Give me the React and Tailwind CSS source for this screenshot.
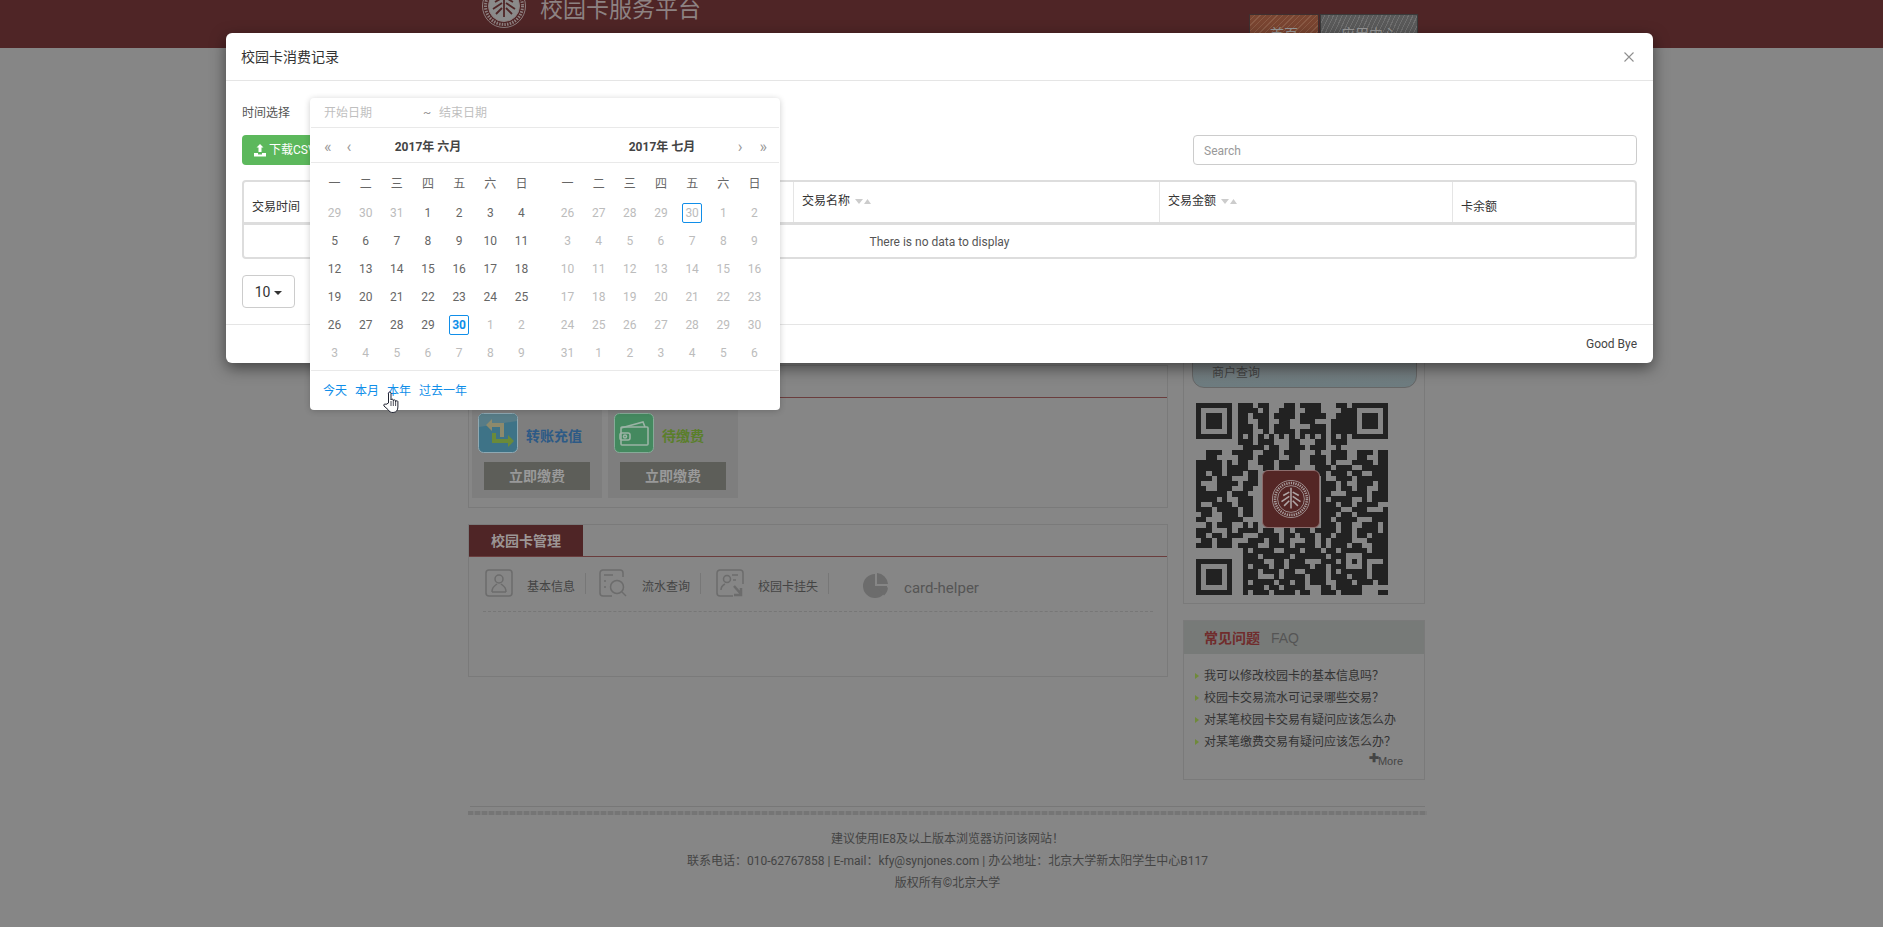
const june = [
  ...[29, 30, 31].map((d) => ({ d, off: true })),
  ...Array.from({ length: 30 }, (_, i) => ({ d: i + 1, off: false })),
  ...Array.from({ length: 9 }, (_, i) => ({ d: i + 1, off: true })),
];
const july = [
  ...[26, 27, 28, 29, 30].map((d) => ({ d, off: true })),
  ...Array.from({ length: 31 }, (_, i) => ({ d: i + 1, off: true })),
  ...Array.from({ length: 6 }, (_, i) => ({ d: i + 1, off: true })),
];
const weekdays = ['一', '二', '三', '四', '五', '六', '日'];

const qrRows = [
  '........###.##...##.####...##.#......',
  '........####.#..###..###....##.......',
  '........##.###.####.#####..###.......',
  '........##..##..##..###...####.......',
  '........###.##.###....###.####.......',
  '........###..#.####.#####.####.......',
  '........#.#.#.#.#.#.#.#.#.#.#........',
  '........###.###...##...##.###........',
  '.........####.##..###.###..#.........',
  '..###..####..###.###...#..###..###.##',
  '..##....###.####..##..###.###..##..##',
  '#####.#.##..###.####..###.#...####.##',
  '#####.####...##.###....###.###..#####',
  '##.##.###.##...........##.###.##..###',
  '###.###...##............#..###.######',
  '#...####.###............###.#..###.##',
  '##..###..##.............###.##.##..##',
  '######.###..............##...####.###',
  '####.#..###.............#.####..#.###',
  '#..####.###.............###.##.####..',
  '###.####.##.............####..###...#',
  '.##..###.##.............###.##.######',
  '##...####...............##.####...###',
  '..#.###..#.#............###.##..###.#',
  '###...#.####.##..#.###.####.##.####.#',
  '##.##.###...####.##.###.##.###.##.###',
  '.##.###...###.##.#...##.#.####...####',
  '###.###.####..####.####.#.###.##..###',
  '.........#.####..###.###.##.#####.###',
  '.........###.#####.######.###...#####',
  '.........####..##.###...###.#.#.#...#',
  '.........#.###.##.####.##.###...#.###',
  '.........###.###.##..####.#.#####.###',
  '.........###...#.####.###.###.###.###',
  '.........#.####.##.##.###..###.###.##',
  '.........####.##.####...##.#####.....',
  '.........#.###.####.##..###.####...##',
];

function Seal({ size, ring, fill, mark }) {
  return (
    <svg width={size} height={size} viewBox="0 0 44 44" className="shrink-0">
      <circle cx="22" cy="22" r="21.500" fill="none" stroke={ring} strokeWidth="1" />
      <circle cx="22" cy="22" r="18.500" fill="none" stroke={ring} strokeWidth="3" strokeDasharray="1.5 1.2" />
      <circle cx="22" cy="22" r="15.500" fill={fill} stroke={ring} strokeWidth="1" />
      <g fill="none" stroke={mark} strokeWidth="1.800">
        <path d="M22 9v24" />
        <path d="M20 14l-7 4M24 14l7 4M20 19l-9 6M24 19l9 6M20 24l-6 6M24 24l6 6" />
      </g>
    </svg>
  );
}

function QrCode() {
  const cells = [];
  qrRows.forEach((row, y) => {
    row.split('').forEach((c, x) => {
      if (c === '#') cells.push(<rect key={`${x}-${y}`} x={x} y={y} width="1.02" height="1.02" />);
    });
  });
  const finder = (x, y) => (
    <g key={`f${x}${y}`}>
      <rect x={x} y={y} width="7" height="7" />
      <rect x={x + 1} y={y + 1} width="5" height="5" fill="#868686" />
      <rect x={x + 2} y={y + 2} width="3" height="3" />
    </g>
  );
  return (
    <div className="relative w-[192px] h-[192px]">
      <svg width="192" height="192" viewBox="0 0 37 37" fill="#222222" shapeRendering="crispEdges">
        {cells}
        {finder(0, 0)}
        {finder(30, 0)}
        {finder(0, 30)}
        <rect x="28" y="28" width="5" height="5" />
        <rect x="29" y="29" width="3" height="3" fill="#868686" />
        <rect x="30" y="30" width="1" height="1" />
      </svg>
      <div className="absolute left-[66px] top-[67px] w-[58px] h-[58px] rounded-md bg-[#542625] border border-[#8d6e6e] flex items-center justify-center">
        <Seal size={38} ring="#a69a9a" fill="#542625" mark="#b0a6a6" />
      </div>
    </div>
  );
}

function SortCaret() {
  return (
    <svg width="16" height="6" viewBox="0 0 16 6" className="ml-[5px] mt-[7px] shrink-0" fill="#cccccc">
      <path d="M0 0h8l-4 5zM9 5h7l-3.500-5z" />
    </svg>
  );
}

function Month({ title, days, marked, side }) {
  return (
    <div className={`w-[218px] ${side === 'left' ? 'ml-[9px]' : 'ml-[15px]'}`}>
      <div className="grid grid-cols-7 h-[30px] items-center text-center text-[#666]">
        {weekdays.map((w) => (
          <span key={w}>{w}</span>
        ))}
      </div>
      <div className="grid grid-cols-7 text-center" aria-label={title}>
        {days.map((c, i) => (
          <div key={i} className="h-[28px] flex items-center justify-center">
            <span
              className={`w-[20px] h-[20px] leading-[18px] rounded-[2px] border ${
                i === marked ? 'border-[#108ee9]' : 'border-transparent'
              } ${c.off ? 'text-[#bcbcbc]' : i === marked ? 'text-[#108ee9] font-bold' : 'text-[#666]'}`}
            >
              {c.d}
            </span>
          </div>
        ))}
      </div>
    </div>
  );
}

function DatePicker() {
  return (
    <div className="absolute left-[84px] top-[17px] w-[470px] h-[312px] bg-white rounded-[4px] shadow-[0_1px_6px_rgba(0,0,0,0.2)] text-xs">
      {/* input row */}
      <div className="h-[30px] mx-px flex items-center border-b border-[#e9e9e9] text-[#bfbfbf] pl-[13px]">
        <span className="w-[99px] pt-[1px]">开始日期</span>
        <span className="w-[16px] text-[#999]">~</span>
        <span className="pt-[1px]">结束日期</span>
      </div>

      {/* month titles */}
      <div className="h-[35px] mx-px flex border-b border-[#e9e9e9] text-[#444] pt-[3px]">
        <div className="w-[234px] grid grid-cols-[1fr_auto_1fr] items-center">
          <div className="flex items-center gap-[15px] pl-[13px] text-[16px] leading-none text-[#999]">
            <span>«</span>
            <span>‹</span>
          </div>
          <span className="font-bold">2017年 六月</span>
          <span />
        </div>
        <div className="w-[234px] grid grid-cols-[1fr_auto_1fr] items-center">
          <span />
          <span className="font-bold">2017年 七月</span>
          <div className="flex items-center justify-end gap-[17px] pr-[12px] text-[16px] leading-none text-[#999]">
            <span>›</span>
            <span>»</span>
          </div>
        </div>
      </div>

      <div className="flex pt-[6px] h-[207px]">
        <Month title="2017年 六月" days={june} marked={32} side="left" />
        <Month title="2017年 七月" days={july} marked={4} side="right" />
      </div>

      {/* quick ranges */}
      <div className="h-[40px] mx-px flex items-center gap-[8px] border-t border-[#e9e9e9] pl-[12px] text-[#108ee9]">
        <span>今天</span>
        <span>本月</span>
        <span>本年</span>
        <span>过去一年</span>
      </div>
    </div>
  );
}

function Modal() {
  return (
    <div className="absolute left-[226px] top-[33px] w-[1427px] h-[330px] bg-white rounded-[6px] shadow-[0_5px_15px_rgba(0,0,0,0.5)] flex flex-col text-xs text-[#333]">
      <div className="h-[48px] flex items-center justify-between border-b border-[#e5e5e5] pl-[15px] pr-[19px] shrink-0">
        <span className="text-sm text-[#333]">校园卡消费记录</span>
        <svg width="10" height="10" viewBox="0 0 10 10" stroke="#8f8f8f" strokeWidth="1.100">
          <path d="M0.500 0.500l9 9M9.500 0.500l-9 9" />
        </svg>
      </div>

      <div className="h-[243px] shrink-0 relative px-[16px]">
        <div className="h-[54px] pt-[23px] text-[#555] leading-[18px]">时间选择</div>

        <div className="flex justify-between h-[30px]">
          <div className="w-[76px] h-[30px] rounded-[4px] bg-[#5cb85c] text-white flex items-center pl-[11px] gap-[2px]">
            <svg width="14" height="14" viewBox="0 0 14 14" fill="#ffffff">
              <path d="M1 10h4v1.500h4V10h4v3.500H1zM7 1l3.500 3.500H8.500V9h-3V4.500H3.500z" />
            </svg>
            <span>下载CSV</span>
          </div>
          <div className="w-[444px] h-[30px] rounded-[4px] border border-[#cccccc] flex items-center pl-[10px] pt-[1px] text-[#999]">
            Search
          </div>
        </div>

        <div className="mt-[15px] w-[1395px] h-[79px] rounded-[4px] border-2 border-[#dddddd] flex flex-col text-[#333]">
          <div className="h-[40px] flex border-b-[3px] border-[#dddddd] box-content">
            <div className="w-[549px] px-[8px] pt-[16px] leading-[18px]">交易时间</div>
            <div className="w-[366px] border-l border-[#e5e5e5] px-[8px] pt-[10px] flex items-start leading-[18px]">
              交易名称
              <SortCaret />
            </div>
            <div className="w-[293px] border-l border-[#e5e5e5] px-[8px] pt-[10px] flex items-start leading-[18px]">
              交易金额
              <SortCaret />
            </div>
            <div className="flex-1 border-l border-[#e5e5e5] px-[8px] pt-[16px] leading-[18px]">卡余额</div>
          </div>
          <div className="flex-1 flex items-center justify-center text-[#555] pt-[1px]">There is no data to display</div>
        </div>

        <div className="mt-[16px] w-[53px] h-[33px] rounded-[4px] border border-[#cccccc] flex items-center justify-center gap-[4px] text-sm text-[#333]">
          10
          <span className="w-0 h-0 mt-[2px] border-x-4 border-t-4 border-x-transparent border-t-[#333]" />
        </div>

        <DatePicker />
      </div>

      <div className="flex-1 border-t border-[#e5e5e5] flex items-center justify-end pr-[16px] text-[#444]">Good Bye</div>
    </div>
  );
}

function PayCard({ name, color, icon }) {
  return (
    <div className="w-[130px] h-[96px] bg-[#7e7e7e] px-[6px] pt-[11px]">
      <div className="flex items-center gap-[8px]">
        {icon}
        <span className={`text-sm font-bold mt-[5px] ${color}`}>{name}</span>
      </div>
      <div className="mt-[9px] mx-[6px] h-[28px] bg-[#5d5e59] text-[#999] text-sm font-bold flex items-center justify-center">
        立即缴费
      </div>
    </div>
  );
}

function TransferIcon() {
  return (
    <svg width="40" height="40" viewBox="0 0 40 40" className="shrink-0">
      <rect x="0.500" y="0.500" width="39" height="39" rx="5" fill="#3e7387" stroke="#8fa9b3" />
      <path d="M1 14L39 8V5a4 4 0 0 0-4-4H5a4 4 0 0 0-4 4z" fill="#577c87" />
      <path d="M8 12l6-6v4h12v14h-4V14H14v4z" fill="#8d8a6c" />
      <path d="M14 20h4v6h12v-4l6 6-6 6v-4H14z" fill="#6a8a3a" />
    </svg>
  );
}

function WalletIcon() {
  return (
    <svg width="40" height="40" viewBox="0 0 40 40" className="shrink-0">
      <rect x="0.500" y="0.500" width="39" height="39" rx="5" fill="#44895f" stroke="#86ab98" />
      <g fill="none" stroke="#9bb3a5" strokeWidth="1.600">
        <path d="M7 15l22-6 2 5" />
        <rect x="7" y="14" width="27" height="18" rx="1" />
        <rect x="6" y="20" width="10" height="7" rx="2" />
        <circle cx="11" cy="23.500" r="1.500" />
      </g>
    </svg>
  );
}

function NavItem({ label, icon, iconClass, sep = true }) {
  return (
    <div className="flex items-center">
      <span className={iconClass}>{icon}</span>
      <span className="text-xs text-[#444] mt-[7px]">{label}</span>
      {sep && <span className="w-px h-[21px] bg-[#777] ml-[10px]" />}
    </div>
  );
}

function Page() {
  return (
    <>
      <header className="h-[48px] bg-[#4f2526] flex items-start overflow-hidden pl-[482px]">
        <div className="-mt-[16px]">
          <Seal size={44} ring="#8d7f7f" fill="#8a8a8a" mark="#4f2526" />
        </div>
        <h1 className="ml-[14px] -mt-[2px] text-[23px] leading-[23px] text-[#8d8282] font-normal w-[161px] whitespace-nowrap">
          校园卡服务平台
        </h1>
        <nav className="ml-[548px] mt-[14px] flex gap-[1px] text-sm text-[#999]">
          <span className="w-[70px] h-[34px] border border-[#3f3030] bg-[repeating-linear-gradient(135deg,#7a4531_0,#7a4531_3px,#8a5a45_3px,#8a5a45_4px)] text-center pt-[9px]">
            首页
          </span>
          <span className="w-[98px] h-[34px] border border-[#3a3a3a] bg-[repeating-linear-gradient(115deg,#5a5a5a_0,#5a5a5a_3px,#707070_3px,#707070_4px)] text-center pt-[9px]">
            应用中心
          </span>
        </nav>
      </header>

      <main className="ml-[468px] w-[957px] flex justify-between items-start">
        <div className="w-[700px] pt-[317px]">
          <section className="h-[143px] border border-[#7a7a7a]">
            <div className="h-[32px] border-b border-[#6a3d3d]" />
            <div className="flex gap-[6px] pl-[3px] pt-[4px]">
              <PayCard name="转账充值" color="text-[#2d5a86]" icon={<TransferIcon />} />
              <PayCard name="待缴费" color="text-[#5a7f2a]" icon={<WalletIcon />} />
            </div>
          </section>

          <section className="mt-[16px] h-[153px] border border-[#7a7a7a]">
            <div className="h-[32px] border-b border-[#6a3d3d]">
              <div className="w-[114px] h-[31px] bg-[#4f2526] text-[#9c9595] text-sm font-bold flex items-center justify-center">
                校园卡管理
              </div>
            </div>
            <div className="mx-[14px] h-[55px] border-b border-dashed border-[#777] flex items-start pt-[12px]">
              <NavItem
                label="基本信息"
                iconClass="ml-[2px] mr-[14px]"
                icon={
                  <svg width="28" height="28" viewBox="0 0 28 28" fill="none" stroke="#6c6c6c" strokeWidth="1.500" className="block">
                    <rect x="1" y="1" width="26" height="26" rx="3" />
                    <circle cx="14" cy="10" r="4" />
                    <path d="M7 23c0-6 3-6 5-8M21 23c0-6-3-6-5-8M7 23h14" />
                  </svg>
                }
              />
              <NavItem
                label="流水查询"
                iconClass="ml-[13px] mr-[15px]"
                icon={
                  <svg width="28" height="28" viewBox="0 0 28 28" fill="none" stroke="#6c6c6c" strokeWidth="1.500" className="block">
                    <path d="M24 8V4a3 3 0 0 0-3-3H4a3 3 0 0 0-3 3v20a3 3 0 0 0 3 3h9" />
                    <path d="M5 6h9M5 12h2M5 18h2" />
                    <circle cx="18" cy="18" r="6.500" />
                    <path d="M23 23l4 4" />
                  </svg>
                }
              />
              <NavItem
                label="校园卡挂失"
                iconClass="ml-[15px] mr-[14px]"
                icon={
                  <svg width="28" height="28" viewBox="0 0 28 28" fill="none" stroke="#6c6c6c" strokeWidth="1.500" className="block">
                    <path d="M27 15V4a3 3 0 0 0-3-3H4a3 3 0 0 0-3 3v20a3 3 0 0 0 3 3h13" />
                    <circle cx="11" cy="10" r="3.500" />
                    <path d="M5 21c0-4 2-5 4-6M16 6h6M17 11h3" />
                    <path d="M18 17l7 8M25 19v7h-7" strokeWidth="2.500" />
                  </svg>
                }
              />
              <div className="ml-[34px] flex items-center pt-[3px]">
                <svg width="26" height="26" viewBox="0 0 26 26" fill="#6c6c6c" className="mr-[15px]">
                  <path d="M12 1v12h12A12 12 0 1 1 12 1z" />
                  <path d="M14 0a12 12 0 0 1 11 11H14zM14.500 14.500H25a12 12 0 0 1-4 8z" />
                </svg>
                <span className="text-[15px] text-[#555] mt-[5px]">card-helper</span>
              </div>
            </div>
          </section>
        </div>

        <aside className="w-[242px]">
          <section className="h-[556px] border border-[#7a7a7a] flex flex-col justify-end items-start pb-[8px]">
            <div className="ml-[8px] w-[225px] h-[40px] rounded-b-[12px] border border-[#666] bg-linear-to-b from-[#7d7f7f] to-[#6d7c80] text-xs text-[#444] pl-[19px] pt-[15px] leading-[18px]">
              商户查询
            </div>
            <div className="ml-[12px] mt-[15px]">
              <QrCode />
            </div>
          </section>

          <section className="mt-[16px] h-[160px] border border-[#7a7a7a] relative">
            <div className="h-[33px] bg-[#777a78] flex items-center pl-[20px]">
              <span className="text-sm font-bold text-[#702c2c]">常见问题</span>
              <span className="ml-[11px] text-sm text-[#555] font-['Liberation_Sans',sans-serif]">FAQ</span>
            </div>
            <ul className="pt-[11px] pl-[11px] text-xs text-[#333]">
              {['我可以修改校园卡的基本信息吗？', '校园卡交易流水可记录哪些交易？', '对某笔校园卡交易有疑问应该怎么办', '对某笔缴费交易有疑问应该怎么办？'].map((q) => (
                <li key={q} className="h-[22px] flex items-center whitespace-nowrap">
                  <svg width="4" height="6" viewBox="0 0 4 6" fill="#6f8a3a" className="mr-[5px] shrink-0">
                    <path d="M0 0l4 3-4 3z" />
                  </svg>
                  {q}
                </li>
              ))}
            </ul>
            <div className="flex justify-end pr-[21px] pt-[3px] text-[11px] leading-none text-[#444] font-['Liberation_Sans',sans-serif]">
              <span className="font-bold text-[12px] -mt-[4px] mr-[-1px]">✚</span>
              More
            </div>
          </section>
        </aside>
      </main>

      <footer className="ml-[468px] w-[959px] mt-[26px] text-xs text-[#444] text-center">
        <div className="h-px bg-[#777] mx-[2px]" />
        <div className="h-[4px] mt-[4px] bg-[repeating-linear-gradient(90deg,#757575_0,#757575_5px,#7f7f7f_5px,#7f7f7f_7px)]" />
        <p className="mt-[13px] leading-[22px]">建议使用IE8及以上版本浏览器访问该网站！</p>
        <p className="leading-[22px]">联系电话：010-62767858 | E-mail：kfy@synjones.com | 办公地址：北京大学新太阳学生中心B117</p>
        <p className="leading-[22px]">版权所有©北京大学</p>
      </footer>
    </>
  );
}

export default function App() {
  return (
    <div className="relative h-[927px] overflow-hidden bg-[#868686] font-['Roboto','Noto_Sans_CJK_SC',sans-serif]">
      <Page />
      <Modal />
      {/* mouse pointer */}
      <svg width="18" height="22" viewBox="0 0 18 22" className="absolute left-[383px] top-[391px]">
        <path
          d="M5.500 12V2.200c0-1.600 2.500-1.600 2.500 0V9c0-1.200 2.300-1.200 2.300 0v.8c0-1.200 2.300-1.200 2.300 0v.8c0-1.100 2.300-1.100 2.300 0V16c0 3-1.500 5.500-4.800 5.500-2.700 0-3.700-.8-5-2.800L1 15c-.9-1.500.9-2.700 2-1.600z"
          fill="#ffffff"
          stroke="#1f2230"
          strokeWidth="1"
        />
        <path d="M8 10v5M10.300 10v5M12.600 10v5" stroke="#1f2230" strokeWidth="0.800" />
      </svg>
    </div>
  );
}
